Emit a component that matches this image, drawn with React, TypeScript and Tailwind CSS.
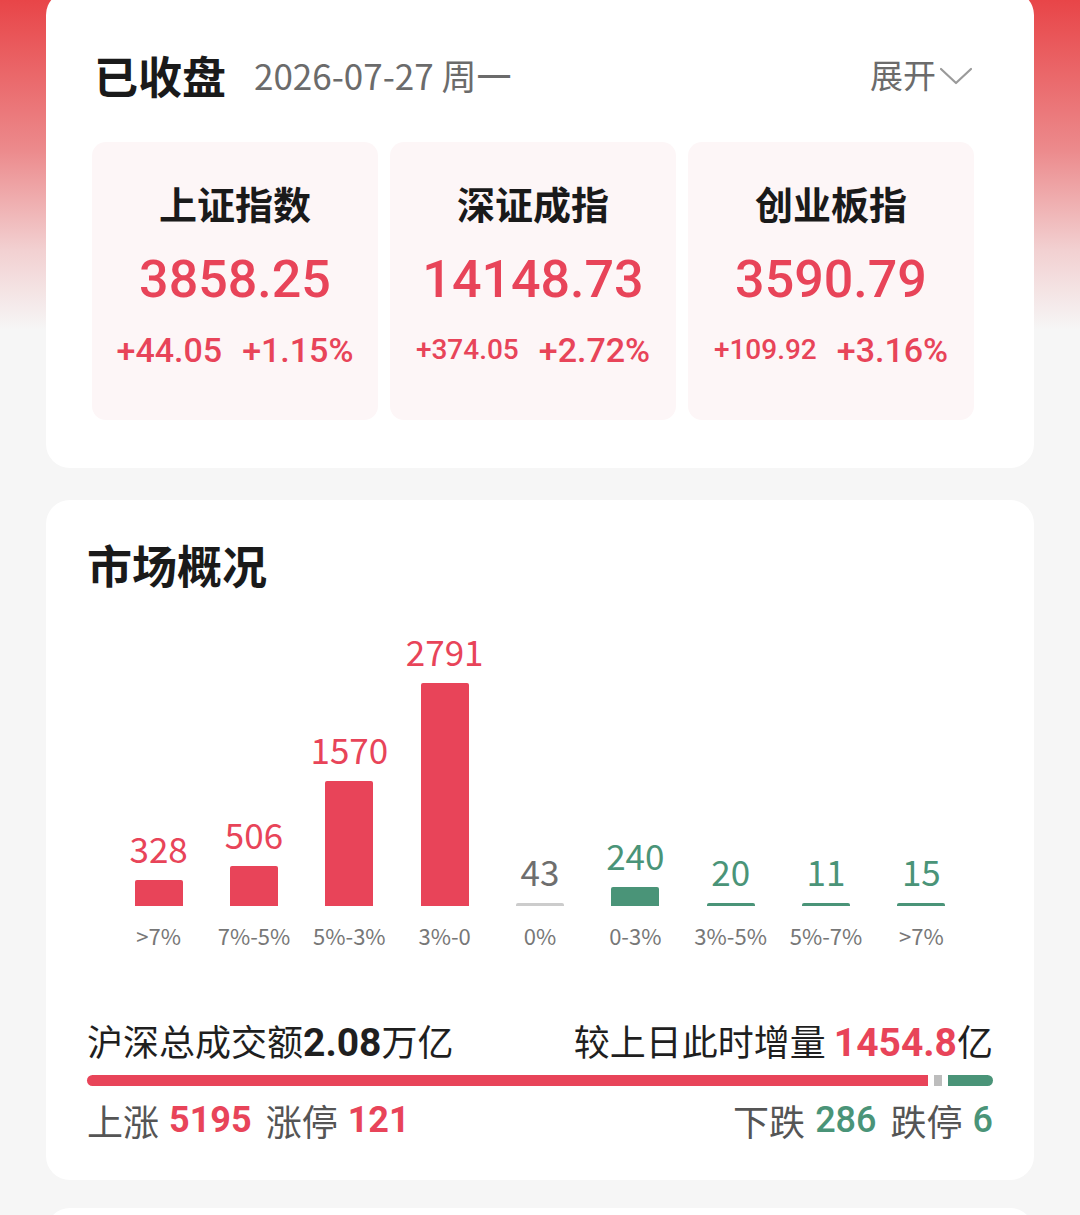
const RED = '#e84459'
const GREEN = '#4a9478'

type Index = { name: string; value: string; change: string; pct: string; small?: boolean }

const INDICES: Index[] = [
  { name: '上证指数', value: '3858.25', change: '+44.05', pct: '+1.15%' },
  { name: '深证成指', value: '14148.73', change: '+374.05', pct: '+2.72%', small: true },
  { name: '创业板指', value: '3590.79', change: '+109.92', pct: '+3.16%', small: true },
]

type Bucket = { label: string; count: number; tone: 'up' | 'flat' | 'down' }

const BUCKETS: Bucket[] = [
  { label: '>7%', count: 328, tone: 'up' },
  { label: '7%-5%', count: 506, tone: 'up' },
  { label: '5%-3%', count: 1570, tone: 'up' },
  { label: '3%-0', count: 2791, tone: 'up' },
  { label: '0%', count: 43, tone: 'flat' },
  { label: '0-3%', count: 240, tone: 'down' },
  { label: '3%-5%', count: 20, tone: 'down' },
  { label: '5%-7%', count: 11, tone: 'down' },
  { label: '>7%', count: 15, tone: 'down' },
]

const MAX_BAR = 223

const numFont = "font-['Roboto','Noto_Sans_CJK_SC',sans-serif]"
const cjkFont = "font-['Noto_Sans_CJK_SC','Noto_Sans',sans-serif]"

function toneColor(tone: Bucket['tone']) {
  if (tone === 'up') return 'text-[#e84459]'
  if (tone === 'down') return 'text-[#4a9478]'
  return 'text-[#6e6e6e]'
}

function barColor(tone: Bucket['tone']) {
  if (tone === 'up') return 'bg-[#e84459]'
  if (tone === 'down') return 'bg-[#4a9478]'
  return 'bg-[#cccccc]'
}

function IndexCard({ item }: { item: Index }) {
  return (
    <div className="flex h-[278px] flex-col items-center rounded-[14px] bg-[#fdf6f7]">
      <div className={`mt-[38px] text-[38px] font-bold leading-[46px] text-[#1a1a1a] ${cjkFont}`}>{item.name}</div>
      <div className={`mt-[26px] text-[52px] font-medium leading-[56px] text-[#e84459] ${numFont}`}>{item.value}</div>
      <div className={`mt-[22px] flex items-center gap-[20px] leading-[40px] font-medium text-[#e84459] ${numFont}`}>
        <span className={item.small ? 'text-[28px]' : 'text-[34px]'}>{item.change}</span>
        <span className="text-[34px]">{item.pct}</span>
      </div>
    </div>
  )
}

function BarChart() {
  const scale = MAX_BAR / Math.max(...BUCKETS.map((b) => b.count))
  return (
    <div className="px-[24px]">
      <div className="grid h-[298px] grid-cols-9 items-end">
        {BUCKETS.map((b, i) => (
          <div key={i} className="flex flex-col items-center">
            <div className={`text-[35px] leading-[40px] ${toneColor(b.tone)} ${cjkFont}`}>{b.count}</div>
            <div
              className={`mt-[12px] w-[48px] rounded-t-[2px] ${barColor(b.tone)}`}
              style={{ height: Math.max(3, Math.round(b.count * scale)) }}
            />
          </div>
        ))}
      </div>
      <div className="mt-[14px] grid grid-cols-9">
        {BUCKETS.map((b, i) => (
          <div key={i} className={`text-center text-[22px] leading-[30px] text-[#777] ${cjkFont}`}>
            {b.label}
          </div>
        ))}
      </div>
    </div>
  )
}

export default function App() {
  return (
    <div className="h-[1215px] overflow-hidden bg-[#f6f6f6] bg-[linear-gradient(180deg,#e84548_0px,#ec8a8c_150px,#f2d0d1_250px,#f6f6f6_330px)]">
      {/* 收盘概览 */}
      <section className="mx-[46px] -mt-[9px] rounded-[24px] bg-white pb-[48px] pl-[46px] pr-[60px] pt-[60px]">
        <div className="flex h-[48px] items-center justify-between">
          <div className="flex items-center gap-[28px] pl-[2px]">
            <span className={`text-[44px] font-bold text-[#1a1a1a] ${cjkFont}`}>已收盘</span>
            <span className={`text-[35px] text-[#6b6b6b] ${cjkFont}`}>2026-07-27 周一</span>
          </div>
          <div className={`flex items-center text-[33px] text-[#6b6b6b] ${cjkFont}`}>
            展开
            <svg width="36" height="22" viewBox="0 0 36 22" fill="none" className="ml-[2px] mt-[2px]">
              <polyline points="3,4 18,18 33,4" stroke="#9a9a9a" strokeWidth="2.2" strokeLinecap="round" strokeLinejoin="round" />
            </svg>
          </div>
        </div>
        <div className="mt-[43px] grid grid-cols-3 gap-[12px]">
          {INDICES.map((item) => (
            <IndexCard key={item.name} item={item} />
          ))}
        </div>
      </section>

      {/* 市场概况 */}
      <section className="mx-[46px] mt-[32px] rounded-[24px] bg-white px-[41px] pb-[36px] pt-[40px]">
        <h2 className={`text-[45px] font-bold leading-[50px] text-[#1a1a1a] ${cjkFont}`}>市场概况</h2>
        <div className="mt-[18px]">
          <BarChart />
        </div>

        <div className={`mt-[69px] flex h-[48px] items-center justify-between text-[36px] text-[#1f1f1f] ${cjkFont}`}>
          <div>
            沪深总成交额<span className={`text-[39px] font-bold ${numFont}`}>2.08</span>万亿
          </div>
          <div>
            较上日此时增量 <span className={`text-[39px] font-bold text-[#e84459] ${numFont}`}>1454.8</span>亿
          </div>
        </div>

        <div className="mt-[8px] flex h-[11px] gap-[6px]">
          <div className="flex-[842] rounded-l-full bg-[#e84459]" />
          <div className="flex-[8] bg-[#bdbdbd]" />
          <div className="flex-[45] rounded-r-full bg-[#4a9478]" />
        </div>

        <div className={`mt-[10px] flex h-[48px] items-center justify-between text-[36px] text-[#555] ${cjkFont}`}>
          <div className="flex items-center gap-[10px]">
            <span>上涨</span>
            <span className={`font-bold ${numFont}`} style={{ color: RED }}>5195</span>
            <span className="ml-[4px]">涨停</span>
            <span className={`font-bold ${numFont}`} style={{ color: RED }}>121</span>
          </div>
          <div className="flex items-center gap-[10px]">
            <span>下跌</span>
            <span className={`font-medium ${numFont}`} style={{ color: GREEN }}>286</span>
            <span className="ml-[4px]">跌停</span>
            <span className={`font-medium ${numFont}`} style={{ color: GREEN }}>6</span>
          </div>
        </div>
      </section>

      <section className="mx-[46px] mt-[28px] h-[200px] rounded-[24px] bg-white" />
    </div>
  )
}
